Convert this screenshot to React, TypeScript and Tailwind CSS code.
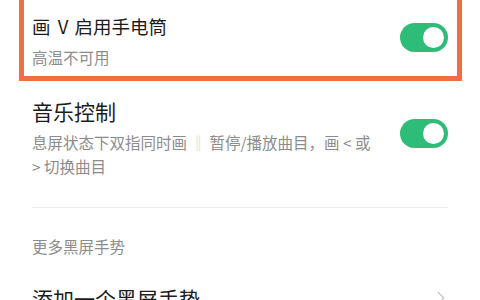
import { ChevronRight } from "lucide-react"

function Toggle({ className = "" }: { className?: string }) {
  return (
    <div className={`flex h-[29px] w-[48px] shrink-0 items-center justify-end rounded-full bg-[#2dbd78] pr-[4px] ${className}`}>
      <div className="h-[21px] w-[21px] rounded-full bg-white" />
    </div>
  )
}

export default function App() {
  return (
    <div
      className="h-[300px] w-[480px] overflow-hidden bg-white"
      style={{ fontFamily: '"Noto Sans CJK SC", "Noto Sans", sans-serif' }}
    >
      {/* highlighted row */}
      <div className="mx-[19px] mr-[18px] flex items-start border-[5px] border-t-0 border-[#ee6f42] pl-[8px] pr-[9px] pb-[7px] pt-[13px]">
        <div className="flex-1">
          <div className="text-[18.5px] leading-[26px] text-[#1c1c1c]">
            画<span className="ml-[3px]"> V </span><span className="ml-[2px]">启用手电筒</span>
          </div>
          <div className="mt-[6px] text-[15.5px] leading-[24px] text-[#8c8c8c]">高温不可用</div>
        </div>
        <Toggle className="mt-[10px]" />
      </div>

      {/* music */}
      <div className="mt-[16px] flex items-start px-[32px]">
        <div className="min-w-0 flex-1 pr-[20px]">
          <div className="text-[21px] leading-[28px] text-[#1c1c1c]">音乐控制</div>
          <div className="mt-[5px] whitespace-nowrap text-[15.5px] leading-[24px] text-[#8c8c8c]">
            息屏状态下双指同时画 <span className="text-[#d0d0d0]">‖</span> 暂停/播放曲目，画 &lt; 或
            <br />
            &gt; 切换曲目
          </div>
        </div>
        <Toggle className="mt-[22px]" />
      </div>

      <div className="mx-[32px] mt-[29px] h-px bg-[#ececec]" />

      <div className="mt-[26px] px-[32px] text-[15.5px] leading-[24px] text-[#8c8c8c]">更多黑屏手势</div>

      <div className="mt-[26px] flex items-center justify-between px-[32px]">
        <span className="text-[21px] leading-[28px] text-[#1c1c1c]">添加一个黑屏手势</span>
        <ChevronRight className="mr-[-4px] h-[22px] w-[22px] text-[#c8c8c8]" strokeWidth={1.5} />
      </div>
    </div>
  )
}
